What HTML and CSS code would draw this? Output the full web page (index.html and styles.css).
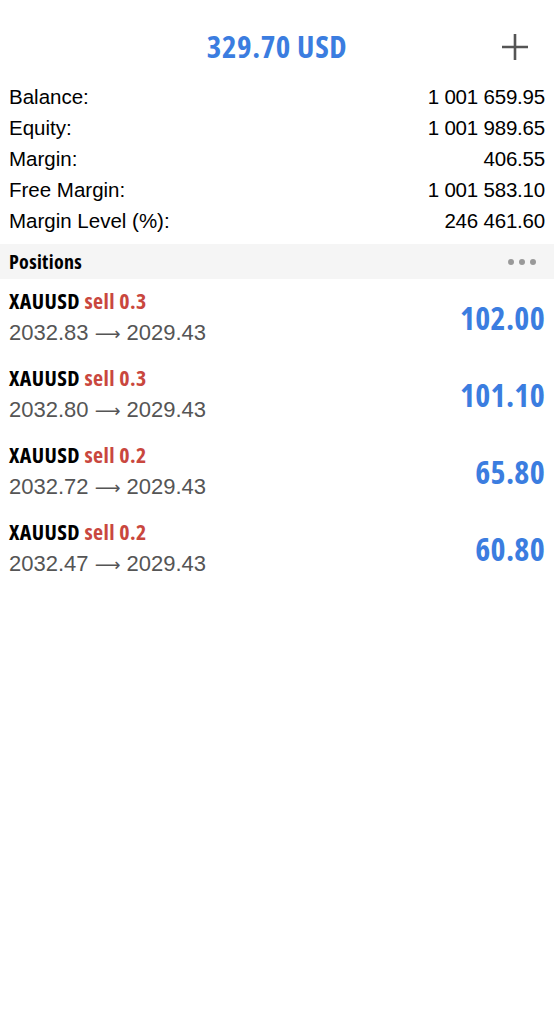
FILE: index.html
```html
<!DOCTYPE html>
<html>
<head>
<meta charset="utf-8">
<link rel="stylesheet" href="styles.css">
</head>
<body>
<header class="top">
  <div class="total">329.70 USD</div>
  <svg class="plus" width="28" height="28" viewBox="0 0 28 28"><path d="M14 1V27M1 14H27" stroke="#555" stroke-width="2.6" fill="none"/></svg>
</header>
<section class="summary">
  <div class="row"><span>Balance:</span><span class="val">1 001 659.95</span></div>
  <div class="row"><span>Equity:</span><span class="val">1 001 989.65</span></div>
  <div class="row"><span>Margin:</span><span class="val">406.55</span></div>
  <div class="row"><span>Free Margin:</span><span class="val">1 001 583.10</span></div>
  <div class="row"><span>Margin Level (%):</span><span class="val">246 461.60</span></div>
</section>
<div class="bar">
  <span class="bar-title">Positions</span>
  <span class="dots"><i></i><i></i><i></i></span>
</div>
<section class="positions">
  <div class="pos">
    <div class="left">
      <div class="sym">XAUUSD <span class="side">sell 0.3</span></div>
      <div class="price">2032.83 <span class="arr">⟶</span> 2029.43</div>
    </div>
    <div class="profit">102.00</div>
  </div>
  <div class="pos">
    <div class="left">
      <div class="sym">XAUUSD <span class="side">sell 0.3</span></div>
      <div class="price">2032.80 <span class="arr">⟶</span> 2029.43</div>
    </div>
    <div class="profit">101.10</div>
  </div>
  <div class="pos">
    <div class="left">
      <div class="sym">XAUUSD <span class="side">sell 0.2</span></div>
      <div class="price">2032.72 <span class="arr">⟶</span> 2029.43</div>
    </div>
    <div class="profit">65.80</div>
  </div>
  <div class="pos">
    <div class="left">
      <div class="sym">XAUUSD <span class="side">sell 0.2</span></div>
      <div class="price">2032.47 <span class="arr">⟶</span> 2029.43</div>
    </div>
    <div class="profit">60.80</div>
  </div>
</section>
</body>
</html>
```
FILE: styles.css
```css
* { box-sizing: border-box; }
html, body { margin: 0; padding: 0; background: #fff; }
body {
  width: 554px;
  font-family: "Liberation Sans", Arial, sans-serif;
  color: #000;
}
.top {
  height: 81px;
  display: flex;
  align-items: center;
  justify-content: center;
  position: relative;
  padding-top: 10px;
}
.total, .bar-title, .sym, .profit {
  font-family: "Open Sans", sans-serif;
  font-stretch: 75%;
  font-weight: 700;
}
.total {
  font-size: 31px;
  color: #3b7de0;
  letter-spacing: 0.6px;
}
.plus {
  position: absolute;
  right: 25px;
  top: 33px;
}
.summary {
  padding: 0 9px;
  margin-bottom: 8px;
}
.row {
  display: flex;
  justify-content: space-between;
  align-items: center;
  height: 31px;
  font-size: 20.5px;
}
.val { letter-spacing: -0.2px; }
.bar {
  height: 35px;
  background: #f5f5f5;
  display: flex;
  align-items: center;
  justify-content: space-between;
  padding: 0 18px 0 9px;
}
.bar-title { font-size: 20px; letter-spacing: 0.3px; }
.dots { display: flex; gap: 5px; }
.dots i {
  display: block;
  width: 6px; height: 6px;
  border-radius: 50%;
  background: #999;
}
.positions { padding: 0 9px; }
.pos {
  height: 77px;
  display: flex;
  align-items: center;
  justify-content: space-between;
}
.left { display: flex; flex-direction: column; }
.sym {
  font-size: 22px;
  line-height: 32px;
  margin-top: -2px;
  letter-spacing: 0.4px;
}
.side { color: #c9473e; }
.price {
  font-size: 22px;
  color: #555;
  line-height: 33px;
}
.arr { font-family: "DejaVu Sans", sans-serif; font-size: 18px; }
.profit {
  font-size: 32px;
  color: #3b7de0;
  letter-spacing: 0.3px;
}
```
